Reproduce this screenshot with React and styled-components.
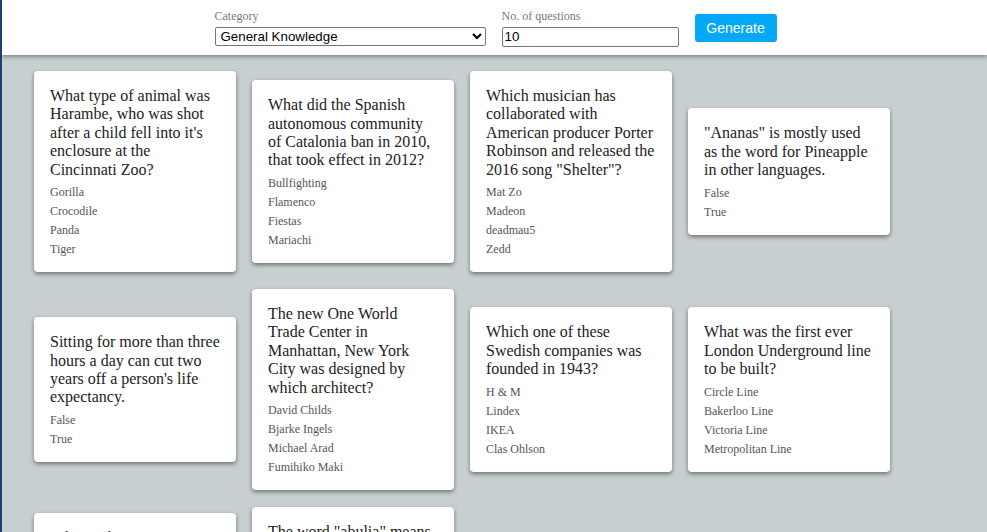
import React from "react";
import styled, { createGlobalStyle } from "styled-components";

const GlobalStyle = createGlobalStyle`
  body {
    margin: 0;
    border-left: 2px solid #1d3f6b;
    background: #c8cfd1;
    font-family: "Liberation Serif", "Times New Roman", serif;
  }
`;

const Header = styled.header`
  position: relative;
  z-index: 1;
  height: 55px;
  background: #fff;
  box-shadow: 0 2px 4px rgba(0, 0, 0, 0.35);
  display: flex;
  justify-content: center;
  align-items: center;
  gap: 16px;
  padding-left: 2px;
`;

const Field = styled.div`
  display: flex;
  flex-direction: column;
  gap: 4px;
`;

const Label = styled.label`
  font-size: 12px;
  line-height: 14px;
  color: #777;
`;

const Select = styled.select`
  width: 271px;
  height: 19px;
  font-family: "Liberation Sans", Arial, sans-serif;
  font-size: 13.33px;
  color: #000;
  border: 1px solid #767676;
  border-radius: 2px;
  background: #fff;
  padding: 0 0 0 1px;
`;

const NumberInput = styled.input`
  box-sizing: border-box;
  width: 177px;
  height: 20px;
  font-family: "Liberation Sans", Arial, sans-serif;
  font-size: 13.33px;
  color: #000;
  border: 1px solid #767676;
  border-radius: 2px;
  padding: 1px 2px;
`;

const Button = styled.button`
  width: 82px;
  height: 28px;
  border: none;
  border-radius: 3px;
  background: #05a8f6;
  color: #fff;
  font-family: "Liberation Sans", Arial, sans-serif;
  font-size: 14px;
  cursor: pointer;
`;

const Grid = styled.main`
  display: grid;
  grid-template-columns: repeat(4, 202px);
  column-gap: 16px;
  row-gap: 17px;
  align-items: center;
  padding: 16px 0 16px 32px;
`;

const Card = styled.div`
  background: #fff;
  border-radius: 4px;
  box-shadow: 0 2px 4px rgba(0, 0, 0, 0.45);
  padding: 16px 16px 13px;
`;

const Question = styled.h3`
  margin: 0 0 4px;
  font-size: 16px;
  line-height: 18.4px;
  font-weight: normal;
  color: #222;
`;

const Answer = styled.div`
  font-size: 12px;
  line-height: 15px;
  padding: 2px 0;
  color: #555;
`;

const questions = [
  {
    q: "What type of animal was Harambe, who was shot after a child fell into it's enclosure at the Cincinnati Zoo?",
    a: ["Gorilla", "Crocodile", "Panda", "Tiger"],
  },
  {
    q: "What did the Spanish autonomous community of Catalonia ban in 2010, that took effect in 2012?",
    a: ["Bullfighting", "Flamenco", "Fiestas", "Mariachi"],
  },
  {
    q: 'Which musician has collaborated with American producer Porter Robinson and released the 2016 song "Shelter"?',
    a: ["Mat Zo", "Madeon", "deadmau5", "Zedd"],
  },
  {
    q: '"Ananas" is mostly used as the word for Pineapple in other languages.',
    a: ["False", "True"],
  },
  {
    q: "Sitting for more than three hours a day can cut two years off a person's life expectancy.",
    a: ["False", "True"],
  },
  {
    q: "The new One World Trade\u00a0Center in Manhattan, New York City was designed by which architect?",
    a: ["David Childs", "Bjarke Ingels", "Michael Arad", "Fumihiko Maki"],
  },
  {
    q: "Which one of these Swedish companies was founded in 1943?",
    a: ["H & M", "Lindex", "IKEA", "Clas Ohlson"],
  },
  {
    q: "What was the first ever London Underground line to be built?",
    a: ["Circle Line", "Bakerloo Line", "Victoria Line", "Metropolitan Line"],
  },
  {
    q: "What is the most common surname in the United States?",
    a: ["Smith", "Johnson", "Jones", "Williams"],
  },
  {
    q: 'The word "abulia" means which of the following?',
    a: [
      "The inability to make decisions",
      "The inability to concentrate on anything",
      "The inability to stand up",
      "A feeling of great happiness and excitement",
    ],
  },
];

function App() {
  return (
    <>
      <GlobalStyle />
      <Header>
        <Field>
          <Label htmlFor="category">Category</Label>
          <Select id="category" defaultValue="9">
            <option value="9">General Knowledge</option>
            <option value="10">Entertainment: Books</option>
            <option value="11">Entertainment: Film</option>
            <option value="17">Science &amp; Nature</option>
          </Select>
        </Field>
        <Field>
          <Label htmlFor="amount">No. of questions</Label>
          <NumberInput id="amount" type="text" defaultValue="10" />
        </Field>
        <Button type="button">Generate</Button>
      </Header>
      <Grid>
        {questions.map((item, i) => (
          <Card key={i}>
            <Question>{item.q}</Question>
            {item.a.map((ans) => (
              <Answer key={ans}>{ans}</Answer>
            ))}
          </Card>
        ))}
      </Grid>
    </>
  );
}

export default App;
